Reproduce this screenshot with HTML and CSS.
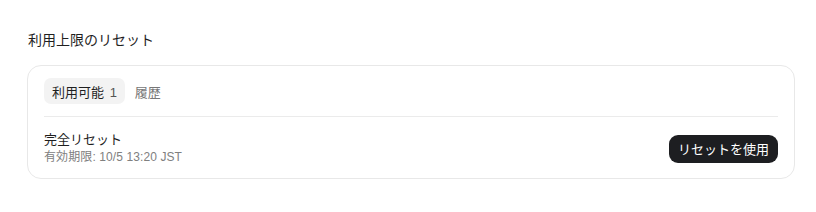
FILE: index.html
```html
<!DOCTYPE html>
<html>
<head>
    <title>利用上限のリセット</title>
    <link rel="stylesheet" href="styles.css">
</head>
<body>
    <div class="section">
        <div class="section-title">利用上限のリセット</div>
        <div class="card">
            <div class="tabs">
                <button class="tab tab-active">利用可能 <span class="tab-count">1</span></button>
                <button class="tab">履歴</button>
            </div>
            <div class="reset-row">
                <div class="reset-info">
                    <div class="reset-name">完全リセット</div>
                    <div class="reset-expiry">有効期限: 10/5 13:20 JST</div>
                </div>
                <button class="use-button">リセットを使用</button>
            </div>
        </div>
    </div>
</body>
</html>
```

FILE: styles.css
```css
body {
    font-family: "Liberation Sans", "Noto Sans CJK JP", sans-serif;
    margin: 0;
    padding: 0;
    background-color: #ffffff;
    color: #1f1f1f;
}
.section {
    padding: 30px 21px 0 27px;
}
.section-title {
    font-size: 14px;
    line-height: 20px;
    margin-left: 1px;
    margin-bottom: 15px;
}
.card {
    border: 1px solid #e8e8e8;
    border-radius: 14px;
    padding: 12px 16px 12px 16px;
}
.tabs {
    display: flex;
    gap: 2px;
    padding-bottom: 12px;
    border-bottom: 1px solid #ebebeb;
}
.tab {
    font-family: inherit;
    font-size: 13px;
    height: 26px;
    padding: 0 8px;
    border: none;
    border-radius: 7px;
    background: none;
    color: #777777;
    cursor: pointer;
}
.tab-active {
    background-color: #f3f3f3;
    color: #1f1f1f;
}
.tab-count {
    color: #555555;
    margin-left: 2px;
}
/* single reset item */
.reset-row {
    display: flex;
    justify-content: space-between;
    align-items: center;
    padding-top: 14px;
}
.reset-name {
    font-size: 13px;
    line-height: 18px;
}
.reset-expiry {
    font-size: 12px;
    line-height: 17px;
    letter-spacing: 0.1px;
    color: #808080;
}
.use-button {
    font-family: inherit;
    font-size: 13px;
    height: 28px;
    padding: 0 9px;
    border: none;
    border-radius: 9px;
    background-color: #1d1e21;
    color: #ffffff;
    cursor: pointer;
}
```
